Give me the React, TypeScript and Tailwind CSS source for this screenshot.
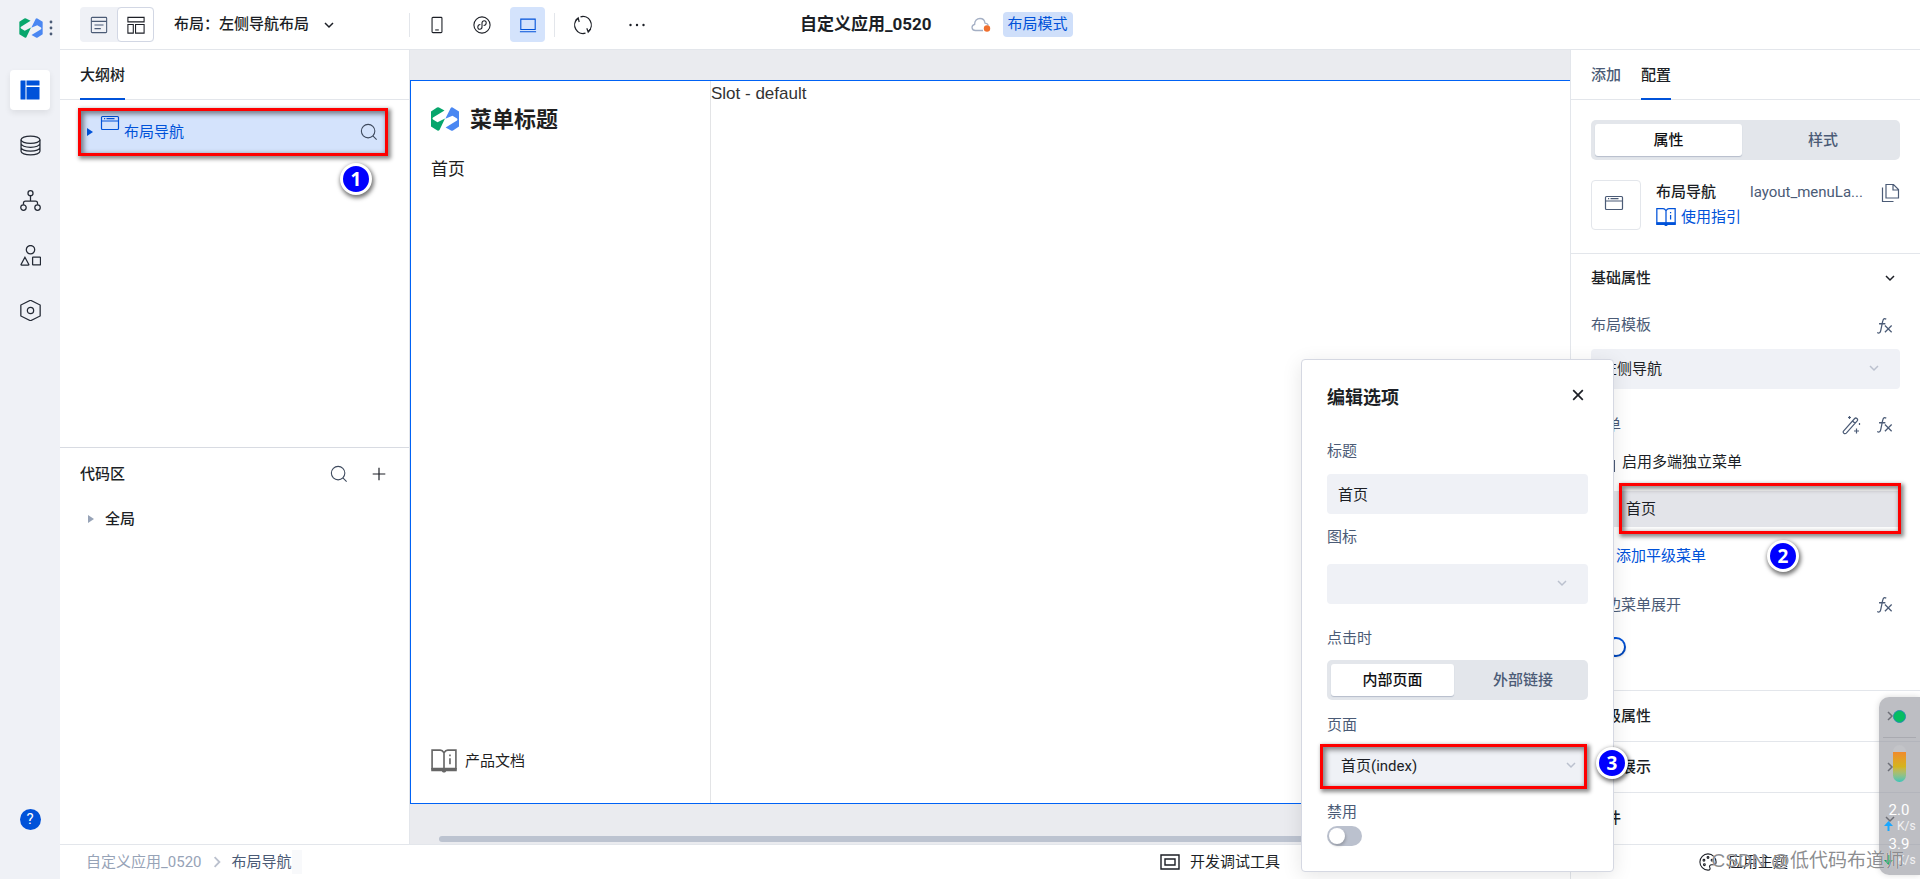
import { useState } from "react";
import type { ReactNode } from "react";
import clsx from "clsx";

function Logo({ className }: { className?: string }) {
  return (
    <svg viewBox="0 0 28 24" className={className} aria-hidden="true">
      <path d="M0 4.500 6 .6Q7 0 8 .5L13.500 3.400 2 10.500Q.8 11.500 2 12.500L6.500 15.200 14 11.500 8.500 23Q7.500 24 6.400 23.500L0 19.500Z" fill="#07a66c" />
      <path d="M14.300 11.800 19.700 1Q20.500 0 21.600.5L28 4.500V19.500L22 23.400Q21 24 20 23.500L14.600 20.500 26 13.500Q27 12.500 26 11.500L21.500 8.700Z" fill="#4a87f2" />
    </svg>
  );
}

function Icon({ size = 20, children, className }: { size?: number; children: ReactNode; className?: string }) {
  return (
    <svg
      width={size}
      height={size}
      viewBox="0 0 20 20"
      fill="none"
      stroke="currentColor"
      strokeWidth="1.2"
      className={clsx("shrink-0", className)}
      aria-hidden="true"
    >
      {children}
    </svg>
  );
}

const Search = () => (
  <Icon size={18}>
    <circle cx="9" cy="9" r="7.500" />
    <path d="m14.300 14.300 4.200 4.200" />
  </Icon>
);

const Chevron = ({ className, size = 10 }: { className?: string; size?: number }) => (
  <Icon size={size} className={className}>
    <path d="m2 6 8 8 8-8" strokeWidth="3" />
  </Icon>
);

const Book = ({ className, size = 20 }: { className?: string; size?: number }) => (
  <svg width={size} height={size} viewBox="0 0 24 24" fill="none" stroke="currentColor" strokeWidth="1.500" className={className} aria-hidden="true">
    <path d="M12 4.500C11 2.800 10 2 8.500 2H1v17h22V2h-7.500C14 2 13 2.800 12 4.500ZM12 4.500V19M17.500 9.500V15M17.500 6v1.500" />
    <path d="M.2 18.500h23.600v3H14c-.5 1.600-3.500 1.600-4 0H.2Z" fill="currentColor" stroke="none" />
  </svg>
);

const WindowIcon = () => (
  <Icon>
    <rect x="1.500" y="3.500" width="17" height="13" rx="1" />
    <path d="M1.500 8h17M4 5.700h1.200M6.500 5.700h8" />
  </Icon>
);

const Fx = ({ label }: { label: string }) => (
  <button aria-label={label} className="text-[#4b5b76]">
    <Icon size={18}>
      <path d="M12.500 2.600C10.500 1 9 2 8.500 5L6.500 14.500C6 17.500 4.500 18.500 2.500 17.300M4.500 7.500h7M11 9.500l7.500 7.500M18.500 9.500 11 17" strokeWidth="1.400" />
    </Icon>
  </button>
);

function Step({ n, className }: { n: number; className: string }) {
  return (
    <span
      className={clsx(
        "absolute z-30 flex size-8 items-center justify-center rounded-full border-[3px] border-white bg-[#0000fe] font-['Noto_Sans'] text-[19px] leading-none font-bold text-white shadow-[1px_2px_4px_1px_rgba(0,0,0,0.55)]",
        className
      )}
    >
      {n}
    </span>
  );
}

function Mark({ className }: { className: string }) {
  return (
    <span
      className={clsx(
        "pointer-events-none absolute z-20 border-[3px] border-[#fe0000] shadow-[2px_2px_4px_1px_rgba(0,0,0,0.45),inset_2px_2px_5px_1px_rgba(0,0,0,0.45)]",
        className
      )}
    />
  );
}

function Segmented({ options, first }: { options: string[]; first: string }) {
  const [active, setActive] = useState(0);
  return (
    <div className="flex h-10 rounded-[5px] bg-[#e3e6eb] p-1">
      {options.map((o, i) => (
        <button
          key={o}
          onClick={() => setActive(i)}
          className={clsx(
            "rounded-[3px] font-medium",
            i === 0 ? first : "flex-1 pl-2",
            active === i ? "bg-white text-[#0f1012] shadow-[0_1px_1px_#b5bccb]" : "text-[#4b5b76]"
          )}
        >
          {o}
        </button>
      ))}
    </div>
  );
}

function Switch({ label, defaultChecked }: { label: string; defaultChecked?: boolean }) {
  return (
    <label className="relative flex h-5 w-[35px]">
      <input
        type="checkbox"
        role="switch"
        aria-label={label}
        defaultChecked={defaultChecked}
        className="peer size-full appearance-none rounded-full bg-[#bbc1ce] checked:bg-[#0052d9]"
      />
      <span className="pointer-events-none absolute top-[2px] left-[2px] size-4 rounded-full bg-white shadow-[1px_2px_3px_rgba(0,0,0,0.2)] peer-checked:left-[17px]" />
    </label>
  );
}

const navItems = [
  {
    label: "数据模型",
    icon: (
      <>
        <ellipse cx="10" cy="4.500" rx="9" ry="3.500" />
        <path d="M1 4.500v11C1 17.500 5 19 10 19s9-1.500 9-3.500v-11M1 8.200c0 2 4 3.500 9 3.500s9-1.500 9-3.500M1 11.900c0 2 4 3.500 9 3.500s9-1.500 9-3.500" />
      </>
    ),
  },
  {
    label: "流程",
    icon: (
      <>
        <circle cx="10" cy="3" r="2.400" />
        <circle cx="3.300" cy="16.700" r="2.600" />
        <circle cx="16.700" cy="16.700" r="2.600" />
        <path d="M10 5.500v5M3.300 14v-1.500q0-2 2-2h9.400q2 0 2 2V14" />
      </>
    ),
  },
  {
    label: "资源",
    icon: (
      <>
        <circle cx="10" cy="4.500" r="4" />
        <path d="M4.700 11.700 1 18.500q-.2.700.5.700h6.400q.8 0 .5-.7Z" />
        <rect x="12" y="11.500" width="7.500" height="7.500" rx=".5" />
      </>
    ),
  },
  {
    label: "设置",
    icon: (
      <>
        <path d="m10 .2 9.200 4.600v10.400L10 19.800.8 15.200V4.800Z" />
        <circle cx="10" cy="10" r="3" />
      </>
    ),
  },
];

function SideNav() {
  return (
    <nav className="flex w-[60px] shrink-0 flex-col items-center bg-[#eff1f6] pb-[49px] text-[#242a35]">
      <div className="flex h-[55px] w-full items-center gap-[6px] pl-[19px]">
        <Logo className="h-5 w-6" />
        <svg width="4" height="16" viewBox="0 0 4 16" fill="#4b5b76" aria-hidden="true">
          <circle cx="2" cy="2" r="1.400" />
          <circle cx="2" cy="8" r="1.400" />
          <circle cx="2" cy="14" r="1.400" />
        </svg>
      </div>
      <div className="mt-[15px] flex flex-col gap-[15px]">
        <button aria-label="页面" className="flex size-10 items-center justify-center rounded bg-white text-[#0052d9] shadow-[0_3px_6px_rgba(0,0,0,0.08)]">
          <svg width="20" height="20" viewBox="0 0 20 20" fill="currentColor" aria-hidden="true">
            <path d="M1 .5h4.500v19H1Q.5 19.500.5 19V1Q.5.5 1 .5ZM6.500.5H19q.5 0 .5.500v4.500h-13ZM6.500 7h13v12q0 .5-.5.500H6.500Z" />
          </svg>
        </button>
        {navItems.map((n) => (
          <button key={n.label} aria-label={n.label} className="flex size-10 items-center justify-center">
            <Icon size={21}>{n.icon}</Icon>
          </button>
        ))}
      </div>
      <button aria-label="帮助" className="mt-auto flex size-[21px] items-center justify-center rounded-full bg-[#0052d9] text-[15px] text-white">
        ?
      </button>
    </nav>
  );
}

function Header() {
  return (
    <header className="relative flex h-[50px] shrink-0 items-center border-b border-[#e3e6eb] bg-white pl-5 text-[#1c1f26]">
      <div className="flex h-[35px] w-[74px] rounded bg-[#eff1f6]">
        <button aria-label="页面视图" className="flex flex-1 items-center justify-center text-[#4b5b76]">
          <Icon size={18}>
            <rect x="1.500" y="1.500" width="17" height="17" rx="1" />
            <path d="M1.500 6h17M5 10h10M5 14h7" />
          </Icon>
        </button>
        <button aria-label="布局视图" className="flex w-[37px] items-center justify-center rounded border border-[#d2d7e4] bg-white">
          <Icon size={18}>
            <path d="M1 1.500h18v5H1ZM1 9.500h6v9.500H1ZM9.500 9.500H19v9.500H9.500Z" />
          </Icon>
        </button>
      </div>
      <button className="ml-5 flex items-center gap-[15px] font-medium">
        布局：左侧导航布局
        <Chevron />
      </button>
      <div className="ml-[75px] flex h-[35px] items-center">
        <span className="h-6 w-px bg-[#e3e6eb]" />
        <button aria-label="手机" className="ml-[18px]">
          <Icon size={18}>
            <rect x="4.500" y="1.500" width="11" height="17" rx="1" />
            <path d="M8 15.500h4" />
          </Icon>
        </button>
        <button aria-label="小程序" className="ml-[27px]">
          <Icon size={18}>
            <circle cx="10" cy="10" r="9" />
            <path d="M8.200 9.400C4.500 9.600 4.500 14.800 7.500 14.800c1.500 0 2.500-1 2.500-2.500V7.700c0-1.500 1-2.500 2.500-2.500 3 0 3 5.200-.7 5.400" />
          </Icon>
        </button>
        <button aria-label="桌面" className="ml-[19px] flex size-[35px] items-center justify-center rounded bg-[#d4e3fc] text-[#0052d9]">
          <Icon size={18}>
            <path d="M2 3.500h16v11.500H2ZM1 17.500h18" />
          </Icon>
        </button>
        <span className="ml-[9px] h-6 w-px bg-[#e3e6eb]" />
        <button aria-label="刷新" className="ml-[18px]">
          <Icon>
            <path d="M12.500 18.200A8.500 8.500 0 0 1 4.500 3.700M7.500 1.800a8.500 8.500 0 0 1 8 14.500" />
            <path d="m2.500 5.500 2.700-2.500 1 4M17.700 14l-2.500 3-1.400-3.700" />
          </Icon>
        </button>
        <button aria-label="更多" className="ml-9">
          <svg width="16" height="4" viewBox="0 0 16 4" fill="currentColor" aria-hidden="true">
            <circle cx="1.500" cy="2" r="1.200" />
            <circle cx="8" cy="2" r="1.200" />
            <circle cx="14.500" cy="2" r="1.200" />
          </svg>
        </button>
      </div>
      <div className="absolute inset-y-0 left-[740px] flex items-center">
        <h1 className="text-[17px] font-bold">自定义应用_0520</h1>
        <svg width="20" height="16" viewBox="0 0 20 16" className="ml-[39px]" fill="none" stroke="#a4afc4" strokeWidth="1.300" aria-hidden="true">
          <path d="M12 13.500H4.500C.5 13.500-.3 8.500 3.700 7.300 3.500 3.500 6 1.500 9 1.500c3 0 4.700 2 5 4.700 1.700.1 2.900 1 3.400 2.300" />
          <circle cx="16" cy="11.500" r="3.200" fill="#f0702f" stroke="none" />
        </svg>
        <span className="ml-3 flex h-[25px] items-center rounded bg-[#cfdffa] px-[5px] text-[#0052d9]">布局模式</span>
      </div>
    </header>
  );
}

function OutlinePanel() {
  return (
    <aside className="flex w-[350px] shrink-0 flex-col border-r border-[#e3e6eb] bg-white">
      <div className="flex h-[50px] shrink-0 border-b border-[#e3e6eb] pl-5">
        <button className="-mb-px border-b-2 border-[#0052d9] pt-[3px] font-medium text-[#1c1f26]">大纲树</button>
      </div>
      <div className="h-[347px] pt-[11px] pr-6 pl-[21px]">
        <div className="relative flex h-[42px] items-center bg-[#d4e3fc] pr-[7px] pl-[6px] text-[#0052d9]">
          <svg width="6" height="8" viewBox="0 0 6 8" fill="currentColor" aria-hidden="true">
            <path d="m0 0 6 4-6 4Z" />
          </svg>
          <span className="ml-[7px] self-start pt-[2px]">
            <WindowIcon />
          </span>
          <span className="ml-1">布局导航</span>
          <button aria-label="搜索大纲" className="ml-auto text-[#3e4a5e]">
            <Search />
          </button>
          <Mark className="-inset-[3px]" />
          <Step n={1} className="top-[52px] right-[13px]" />
        </div>
      </div>
      <div className="flex-1 border-t border-[#d8dbe2] px-5">
        <div className="flex h-[52px] items-center text-[#1c1f26]">
          <h2 className="font-medium">代码区</h2>
          <button aria-label="搜索代码" className="ml-auto text-[#3e4a5e]">
            <Search />
          </button>
          <button aria-label="新建" className="mr-[3px] ml-6">
            <Icon size={14}>
              <path d="M10 1v18M1 10h18" strokeWidth="1.700" />
            </Icon>
          </button>
        </div>
        <button className="flex h-[38px] items-center gap-[11px] pl-2 font-medium text-[#1c1f26]">
          <svg width="6" height="8" viewBox="0 0 6 8" fill="#97a3b7" aria-hidden="true">
            <path d="m0 0 6 4-6 4Z" />
          </svg>
          全局
        </button>
      </div>
    </aside>
  );
}

function Canvas() {
  return (
    <main className="flex min-w-0 flex-1 flex-col bg-[#eaebef] pt-[30px]">
      <div className="flex flex-1 border-y border-l border-[#0062f5] bg-white text-[#1f1f1f]">
        <div className="flex w-[300px] flex-col border-r border-[#e3e4e6] px-5">
          <div className="flex h-[76px] items-center gap-[11px]">
            <Logo className="h-6 w-7" />
            <h2 className="text-[22px] font-bold">菜单标题</h2>
          </div>
          <a href="#home" className="flex h-[26px] items-center text-[17px]">
            首页
          </a>
          <a href="#docs" className="mt-auto mb-7 flex h-7 items-center gap-2">
            <Book size={26} className="text-[#666]" />
            产品文档
          </a>
        </div>
        <div className="pt-[1px] font-['Liberation_Sans'] text-[17px] leading-6 text-[#333]">Slot - default</div>
      </div>
      <div className="flex h-10 items-end pb-[2px] pl-[29px]">
        <div className="h-[6px] flex-1 rounded-l-full bg-[#bcc3d0]" />
      </div>
    </main>
  );
}

function ConfigPanel() {
  return (
    <aside className="w-[350px] shrink-0 border-l border-[#e3e6eb] bg-white text-[#1c1f26]">
      <div className="flex h-[50px] gap-5 border-b border-[#e3e6eb] pl-5 font-medium">
        <button className="pt-[1px] text-[#4b5b76]">添加</button>
        <button className="-mb-px border-b-2 border-[#0052d9] pt-[3px]">配置</button>
      </div>
      <div className="border-b border-[#e3e6eb] px-5 pt-5 pb-[23px]">
        <Segmented options={["属性", "样式"]} first="w-[147px]" />
        <div className="mt-5 flex h-[50px]">
          <div className="flex size-[50px] items-center justify-center rounded border border-[#e3e6eb] pr-1 pb-1 text-[#4b5b76]">
            <WindowIcon />
          </div>
          <div className="ml-[15px] min-w-0 flex-1">
            <div className="flex h-[25px] items-center">
              <h2 className="font-medium">布局导航</h2>
              <span className="ml-auto w-[117px] text-[#4b5b76]">layout_menuLa...</span>
              <button aria-label="复制" className="ml-[13px] text-[#4b5b76]">
                <Icon>
                  <path d="M6 1.500h7.500l5 5V15H6ZM13 1.500V7h5.500M2.500 4.500v14h11" />
                </Icon>
              </button>
            </div>
            <a href="#guide" className="flex h-6 items-center gap-[5px] text-[#0052d9]">
              <Book />
              使用指引
            </a>
          </div>
        </div>
      </div>
      <div className="border-b border-[#e3e6eb] px-5 pb-[33px]">
        <button className="flex h-12 w-full items-center justify-between pr-[5px] font-medium">
          基础属性
          <Chevron />
        </button>
        <div className="flex h-[47px] items-center justify-between pr-[7px]">
          <label htmlFor="template" className="text-[#4b5b76]">
            布局模板
          </label>
          <Fx label="绑定布局模板" />
        </div>
        <div className="relative">
          <select id="template" className="h-10 w-full appearance-none rounded bg-[#eff1f6] px-[11px]">
            <option>左侧导航</option>
          </select>
          <Chevron className="pointer-events-none absolute top-[14px] right-[21px] text-[#bbc1ce]" />
        </div>
        <div className="mt-3 flex h-12 items-center pr-[7px] text-[#4b5b76]">
          菜单
          <button aria-label="编辑菜单" className="mr-[14px] ml-auto">
            <Icon>
              <path d="m2.700 15.800 11-12.300q1-1 2.200 0 1.300 1.100.3 2.300L5.300 18.100q-1.200 1.200-2.500.1-1.200-1.200-.1-2.400ZM11.500 6l2.600 2.300" />
              <path d="M15.500 13.500v5M13 16h5M8.500 1v3M7 2.500h3M18.500 8v2" />
            </Icon>
          </button>
          <Fx label="绑定菜单" />
        </div>
        <label className="flex h-[26px] items-center gap-[7px] pl-3">
          <input type="checkbox" className="mt-2 size-3 appearance-none border border-[#4b5b76]" />
          启用多端独立菜单
        </label>
        <div className="relative mt-4 flex h-9 items-center bg-[#e3e4e9] pl-[35px]">
          首页
          <Mark className="-top-2 -right-px -bottom-[7px] left-7" />
          <Step n={2} className="top-[49px] right-[101px]" />
        </div>
        <button className="mt-4 flex h-[26px] items-center pl-[25px] text-[#0052d9]">添加平级菜单</button>
        <div className="mt-3 mb-2 flex h-12 items-center justify-between pr-[7px] text-[#4b5b76]">
          侧边菜单展开
          <Fx label="绑定侧边菜单展开" />
        </div>
        <Switch label="侧边菜单展开" defaultChecked />
      </div>
      <button className="flex h-[51px] w-full items-center justify-between border-b border-[#e3e6eb] pr-[25px] pl-5 font-medium">
        高级属性
        <Chevron className="-rotate-90" />
      </button>
      <button className="flex h-[51px] w-full items-center justify-between border-b border-[#e3e6eb] pr-[25px] pl-5 font-medium">
        条件展示
        <Chevron className="-rotate-90" />
      </button>
      <button className="flex h-[51px] w-full items-center justify-between pr-[25px] pl-5 font-medium">
        事件
        <Chevron />
      </button>
    </aside>
  );
}

function EditDialog() {
  return (
    <div
      role="dialog"
      aria-labelledby="dialog-title"
      className="absolute right-[306px] bottom-[7px] z-10 w-[313px] rounded border border-[#d5d8e2] bg-white px-[25px] pt-[10px] pb-[25px] text-[#1c1f26] shadow-[0_4px_20px_rgba(0,0,0,0.1)]"
    >
      <div className="flex h-[54px] items-center justify-between pr-1">
        <h2 id="dialog-title" className="text-[18px] font-bold">
          编辑选项
        </h2>
        <button aria-label="关闭" className="pb-1">
          <Icon size={12}>
            <path d="m2 2 16 16M18 2 2 18" strokeWidth="2.800" />
          </Icon>
        </button>
      </div>
      <label htmlFor="title" className="mt-3 mb-1 flex h-[34px] items-center pb-1 text-[#4b5b76]">
        标题
      </label>
      <input id="title" defaultValue="首页" className="h-10 w-full rounded bg-[#eff1f6] px-[11px] pb-[2px]" />
      <label htmlFor="icon" className="flex h-[50px] items-center pb-1 text-[#4b5b76]">
        图标
      </label>
      <div className="relative">
        <select id="icon" className="h-10 w-full appearance-none rounded bg-[#eff1f6] px-[11px]">
          <option></option>
        </select>
        <Chevron className="pointer-events-none absolute top-[14px] right-[21px] text-[#bbc1ce]" />
      </div>
      <div className="mt-4 flex h-10 items-center pb-1 text-[#4b5b76]">点击时</div>
      <Segmented options={["内部页面", "外部链接"]} first="w-[123px]" />
      <label htmlFor="page" className="flex h-[47px] items-center pt-[3px] text-[#4b5b76]">
        页面
      </label>
      <div className="relative mr-1 -ml-1">
        <select id="page" className="block h-[39px] w-full appearance-none bg-[#eff1f6] px-[18px]">
          <option>首页(index)</option>
        </select>
        <Chevron className="pointer-events-none absolute top-[13px] right-2 text-[#bbc1ce]" />
        <Mark className="-inset-[3px]" />
        <Step n={3} className="top-0 -right-11" />
      </div>
      <div className="mt-3 flex h-7 items-center text-[#4b5b76]">禁用</div>
      <Switch label="禁用" />
    </div>
  );
}

function Footer() {
  return (
    <footer className="flex h-[35px] shrink-0 border-t border-[#e3e6eb] bg-white text-[#1c1f26]">
      <div className="flex items-center pl-[26px]">
        <a href="#app" className="text-[#97a3b7]">
          自定义应用_0520
        </a>
        <Chevron size={12} className="mr-[9px] ml-[9px] -rotate-90 text-[#bbc1ce]" />
        <a href="#layout" className="text-[#4b5b76]">
          布局导航
        </a>
        <span className="h-6 w-[10px] bg-[#f8f9fb]" />
      </div>
      <button className="mr-[290px] ml-auto flex items-center gap-[10px]">
        <Icon>
          <path d="M1 3h18v14H1ZM5 7h10v6H5Z" strokeWidth="1.400" />
        </Icon>
        开发调试工具
      </button>
      <div className="flex w-[350px] items-center border-l border-[#e3e6eb] pl-[128px]">
        <button className="flex items-center gap-[11px]">
          <Icon size={18}>
            <path d="M10 1a9 9 0 1 0 0 18c2.500 0 2.700-1.700 2-3-.8-1.500.2-3 2-3h2.500c1.600 0 2.500-1 2.500-3 0-5-4-9-9-9Z" />
            <circle cx="5.500" cy="8" r="1" />
            <circle cx="10" cy="5" r="1" />
            <circle cx="14.500" cy="8" r="1" />
            <circle cx="6" cy="13" r="1" />
          </Icon>
          应用主题
        </button>
      </div>
    </footer>
  );
}

function Speed({ value, up }: { value: string; up?: boolean }) {
  return (
    <div className="flex h-[34px] flex-col text-center leading-4">
      <span className="pr-[1px] text-[15px]">{value}</span>
      <span className="flex items-center gap-1 pl-[5px] text-[12px] text-white/80">
        <svg width="9" height="10" viewBox="0 0 9 10" className={up ? "text-[#1aa7ff]" : "rotate-180 text-[#08a95c]"} aria-hidden="true">
          <path d="M4.500 0 9 5H5.500v5h-2V5H0Z" fill="currentColor" />
        </svg>
        K/s
      </span>
    </div>
  );
}

function Monitor() {
  return (
    <div className="absolute right-0 bottom-1 z-20 flex h-[178px] w-[41px] flex-col rounded-l-[10px] bg-[#9a9ba3]/65 pt-[13px] text-white shadow-[0_0_6px_rgba(0,0,0,0.15)]">
      <span className="ml-[14px] size-[13px] rounded-full border border-[#2a8fb0] bg-[#06bd62]" />
      <span className="mx-1 mt-[14px] h-px bg-[#a9aab0]" />
      <span className="mt-[7px] ml-[14px] h-[37px] w-[13px] overflow-hidden rounded-full bg-[#c3c4c8] pt-[7px]">
        <span className="block h-full bg-linear-to-b from-[#f08a2c] via-[#d3b51d] to-[#30c5b8]" />
      </span>
      <div className="mt-5">
        <Speed value="2.0" up />
        <Speed value="3.9" />
      </div>
    </div>
  );
}

export default function App() {
  return (
    <div className="relative flex h-screen min-h-[879px] overflow-hidden font-['Roboto','Noto_Sans_CJK_SC',sans-serif] text-[15px] leading-normal">
      <SideNav />
      <div className="flex min-w-0 flex-1 flex-col">
        <Header />
        <div className="flex min-h-0 flex-1">
          <OutlinePanel />
          <Canvas />
          <ConfigPanel />
        </div>
        <Footer />
      </div>
      <EditDialog />
      <Monitor />
      <span className="pointer-events-none absolute right-4 bottom-1 z-30 font-['Liberation_Sans','Noto_Sans_CJK_SC',sans-serif] text-[19px] text-[#77787c]/85 [text-shadow:0_0_1px_#fff]">
        CSDN @低代码布道师
      </span>
    </div>
  );
}
